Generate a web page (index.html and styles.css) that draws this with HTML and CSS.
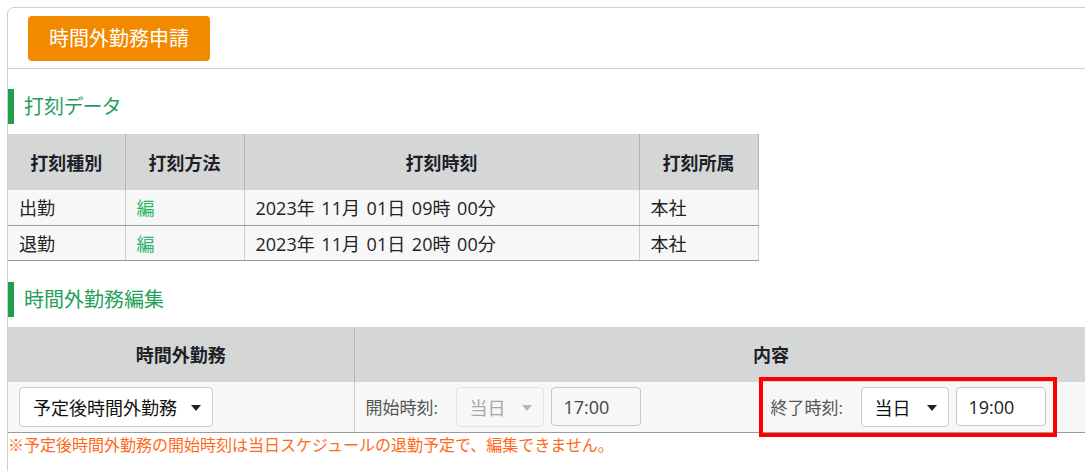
FILE: index.html
```html
<!DOCTYPE html>
<html lang="ja">
<head>
<meta charset="utf-8">
<title>時間外勤務申請</title>
<link rel="stylesheet" href="styles.css">
</head>
<body>
<div class="card">
  <div class="toolbar">
    <button class="btn-apply" type="button">時間外勤務申請</button>
  </div>
  <div class="content">
    <h2 class="section-title">打刻データ</h2>
    <table class="grid stamp">
      <colgroup>
        <col class="c1"><col class="c2"><col class="c3"><col class="c4">
      </colgroup>
      <thead>
        <tr><th>打刻種別</th><th>打刻方法</th><th>打刻時刻</th><th>打刻所属</th></tr>
      </thead>
      <tbody>
        <tr><td>出勤</td><td><a class="edit-link" href="#">編</a></td><td class="datetime">2023年 11月 01日 09時 00分</td><td>本社</td></tr>
        <tr><td>退勤</td><td><a class="edit-link" href="#">編</a></td><td class="datetime">2023年 11月 01日 20時 00分</td><td>本社</td></tr>
      </tbody>
    </table>

    <h2 class="section-title second">時間外勤務編集</h2>
    <table class="grid overtime">
      <colgroup>
        <col class="o1"><col class="o2">
      </colgroup>
      <thead>
        <tr><th>時間外勤務</th><th>内容</th></tr>
      </thead>
      <tbody>
        <tr>
          <td class="type-cell">
            <div class="select wide"><span>予定後時間外勤務</span><i class="caret"></i></div>
          </td>
          <td class="detail-cell">
            <div class="detail">
              <div class="group start">
                <span class="label">開始時刻:</span>
                <div class="select day disabled"><span>当日</span><i class="caret"></i></div>
                <div class="input time readonly">17:00</div>
              </div>
              <div class="group end">
                <span class="label">終了時刻:</span>
                <div class="select day"><span>当日</span><i class="caret"></i></div>
                <div class="input time">19:00</div>
                <div class="highlight"></div>
              </div>
            </div>
          </td>
        </tr>
      </tbody>
    </table>
    <p class="note">※予定後時間外勤務の開始時刻は当日スケジュールの退勤予定で、編集できません。</p>
  </div>
</div>
</body>
</html>
```
FILE: styles.css
```css
* { box-sizing: border-box; }
html, body {
  margin: 0;
  padding: 0;
  background: #fff;
  overflow: hidden;
}
body {
  font-family: "Open Sans", "Noto Sans CJK JP", sans-serif;
  color: #222;
  width: 1085px;
  height: 471px;
}
.card {
  margin: 7px 0 0 7px;
  width: 1300px;
  border: 1px solid #cfcfcf;
  border-radius: 7px 0 0 0;
  min-height: 500px;
}
.toolbar {
  padding: 8px 0 7px 20px;
  border-bottom: 1px solid #cfcfcf;
}
.btn-apply {
  display: block;
  width: 182px;
  height: 45px;
  background: #f28a00;
  border: none;
  border-radius: 4px;
  color: #fff;
  font-family: inherit;
  font-size: 20px;
  line-height: 45px;
  padding: 0;
}
.content {
  padding-top: 20px;
}
.section-title {
  margin: 0;
  height: 35px;
  border-left: 6px solid #1f9e4b;
  padding-left: 10px;
  font-weight: normal;
  font-size: 20px;
  line-height: 35px;
  color: #25a05a;
  font-feature-settings: "palt";
}
.section-title.second {
  margin-top: 21px;
}
.grid {
  border-collapse: collapse;
  table-layout: fixed;
  margin-top: 10px;
}
.grid th {
  background: #d5d7d7;
  font-weight: bold;
  font-size: 18px;
  text-align: center;
  color: #1e1e28;
  border-right: 1px solid #b5b5b5;
  padding: 0;
}
.grid td {
  background: #f7f7f7;
  font-size: 18px;
  border-right: 1px solid #cdcdcd;
  border-bottom: 1px solid #9c9c9c;
  padding: 0 0 0 11px;
  white-space: nowrap;
}
.grid td.datetime { word-spacing: 2px; }
.stamp { width: 750px; }
.stamp .c1 { width: 117px; }
.stamp .c2 { width: 119px; }
.stamp .c3 { width: 395px; }
.stamp .c4 { width: 119px; }
.stamp th { height: 56px; }
.stamp td { height: 35px; }
.edit-link {
  color: #2cb66c;
  text-decoration: none;
}
.overtime { width: 1180px; }
.overtime .o1 { width: 346px; }
.overtime .o2 { width: 834px; }
.overtime th { height: 55px; }
.overtime td { height: 51px; }
.type-cell { padding-left: 11px; }
.detail-cell { padding-left: 12px; }
.detail {
  display: flex;
  align-items: center;
}
.group {
  display: flex;
  align-items: center;
  position: relative;
}
.group.start { width: 405px; }
.label {
  color: #555;
  font-size: 17px;
  width: 90px;
}
.select {
  position: relative;
  height: 40px;
  border: 1px solid #cacaca;
  border-radius: 4px;
  background: #fff;
  display: flex;
  align-items: center;
  padding-left: 13px;
  font-size: 18px;
  color: #111;
}
.select.wide { width: 194px; }
.select.day { width: 88px; }
.select.disabled {
  background: #f7f7f7;
  border-color: #e2e2e2;
  color: #a8a8a8;
}
.caret {
  position: absolute;
  right: 11px;
  top: 17px;
  width: 0;
  height: 0;
  border-left: 5px solid transparent;
  border-right: 5px solid transparent;
  border-top: 6px solid #222;
}
.select.disabled .caret { border-top-color: #b5b5b5; }
.input {
  height: 39px;
  width: 90px;
  margin-left: 7px;
  border: 1px solid #c8c8c8;
  border-radius: 4px;
  background: #fff;
  display: flex;
  align-items: center;
  padding-left: 12px;
  font-size: 18px;
  color: #222;
}
.input.readonly {
  background: #f7f7f7;
  color: #444;
}
.highlight {
  position: absolute;
  left: -12px;
  top: -10px;
  width: 298px;
  height: 60px;
  border: 4px solid #ff0000;
  pointer-events: none;
}
.note {
  margin: 2px 0 0 0;
  font-size: 16px;
  color: #ff6a1a;
  line-height: 20px;
}
```
